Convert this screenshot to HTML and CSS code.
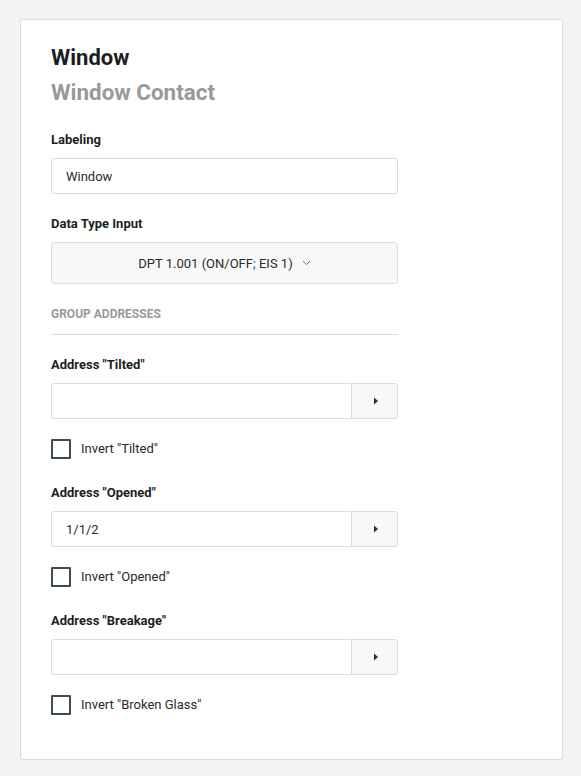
FILE: index.html
```html
<!DOCTYPE html>
<html lang="en">
  <head>
    <meta charset="UTF-8" />
    <meta name="viewport" content="width=device-width, initial-scale=1.0" />
    <title>Window Contact</title>
    <link rel="stylesheet" href="styles.css">
  </head>
  <body>
    <div class="card">
      <h1 class="title">Window</h1>
      <h2 class="subtitle">Window Contact</h2>

      <div class="field first">
        <label class="label">Labeling</label>
        <input class="input" value="Window" />
      </div>

      <div class="field">
        <label class="label">Data Type Input</label>
        <button class="select">
          DPT 1.001 (ON/OFF; EIS 1)
          <svg class="chevron" width="9" height="6" viewBox="0 0 9 6"><path d="M1 1l3.5 3.5L8 1" fill="none" stroke="#777" stroke-width="1"/></svg>
        </button>
      </div>

      <div class="section">Group Addresses</div>

      <div class="field group">
        <label class="label">Address "Tilted"</label>
        <div class="input-group">
          <input class="input" value="" />
          <button class="go"><svg width="6" height="8" viewBox="0 0 6 8"><path d="M1 0.5L5 4L1 7.5Z" fill="#2a3138"/></svg></button>
        </div>
        <label class="check"><span class="box"></span>Invert "Tilted"</label>
      </div>

      <div class="field group">
        <label class="label">Address "Opened"</label>
        <div class="input-group">
          <input class="input" value="1/1/2" />
          <button class="go"><svg width="6" height="8" viewBox="0 0 6 8"><path d="M1 0.5L5 4L1 7.5Z" fill="#2a3138"/></svg></button>
        </div>
        <label class="check"><span class="box"></span>Invert "Opened"</label>
      </div>

      <div class="field group">
        <label class="label">Address "Breakage"</label>
        <div class="input-group">
          <input class="input" value="" />
          <button class="go"><svg width="6" height="8" viewBox="0 0 6 8"><path d="M1 0.5L5 4L1 7.5Z" fill="#2a3138"/></svg></button>
        </div>
        <label class="check"><span class="box"></span>Invert "Broken Glass"</label>
      </div>
    </div>
  </body>
</html>
```

FILE: styles.css
```css
* {
  box-sizing: border-box;
}

body {
  margin: 0;
  padding: 19px 18px 16px 20px;
  background: #f3f3f3;
  font-family: Roboto, "Liberation Sans", sans-serif;
  color: #222;
}

.card {
  width: 543px;
  background: #fff;
  border: 1px solid #dcdcdc;
  border-radius: 2px;
  padding: 25px 30px 44px 30px;
}

.title {
  margin: 0;
  font-size: 22px;
  line-height: 26px;
  font-weight: 700;
  color: #1c1f22;
}

.subtitle {
  margin: 8px 0 0;
  font-size: 22.4px;
  line-height: 26px;
  font-weight: 700;
  color: #999;
}

.field {
  width: 347px;
  margin-top: 22px;
}

.field.first {
  margin-top: 27px;
}

.section + .field {
  margin-top: 22px;
}

.field.group + .field.group {
  margin-top: 26px;
}

.label {
  display: block;
  font-size: 13px;
  line-height: 16px;
  font-weight: 700;
  color: #1c1f22;
  margin-bottom: 10px;
}

.input {
  display: block;
  width: 100%;
  height: 36px;
  border: 1px solid #dcdcdc;
  border-radius: 3px;
  padding: 0 14px;
  font-family: inherit;
  font-size: 13px;
  color: #2a2a2a;
  background: #fff;
  outline: none;
}

.select {
  display: flex;
  align-items: center;
  justify-content: center;
  gap: 9px;
  width: 100%;
  height: 42px;
  border: 1px solid #dcdcdc;
  border-radius: 3px;
  background: #f8f8f8;
  font-family: inherit;
  font-size: 13px;
  color: #2a2a2a;
  padding: 0;
}

.section {
  width: 347px;
  margin-top: 22px;
  padding-bottom: 12px;
  border-bottom: 1px solid #dcdcdc;
  font-size: 12px;
  line-height: 16px;
  font-weight: 700;
  color: #999;
  text-transform: uppercase;
}

.input-group {
  display: flex;
}

.input-group .input {
  flex: 1;
  border-radius: 3px 0 0 3px;
}

.go {
  width: 46px;
  height: 36px;
  border: 1px solid #dcdcdc;
  border-left: none;
  border-radius: 0 3px 3px 0;
  background: #f8f8f8;
  display: flex;
  align-items: center;
  justify-content: center;
  padding: 0 0 0 2px;
}

.check {
  display: flex;
  align-items: center;
  gap: 10px;
  margin-top: 20px;
  font-size: 13px;
  line-height: 20px;
  color: #2a2a2a;
}

.box {
  width: 20px;
  height: 20px;
  border: 2px solid #3d4b55;
  border-radius: 1px;
}
```
